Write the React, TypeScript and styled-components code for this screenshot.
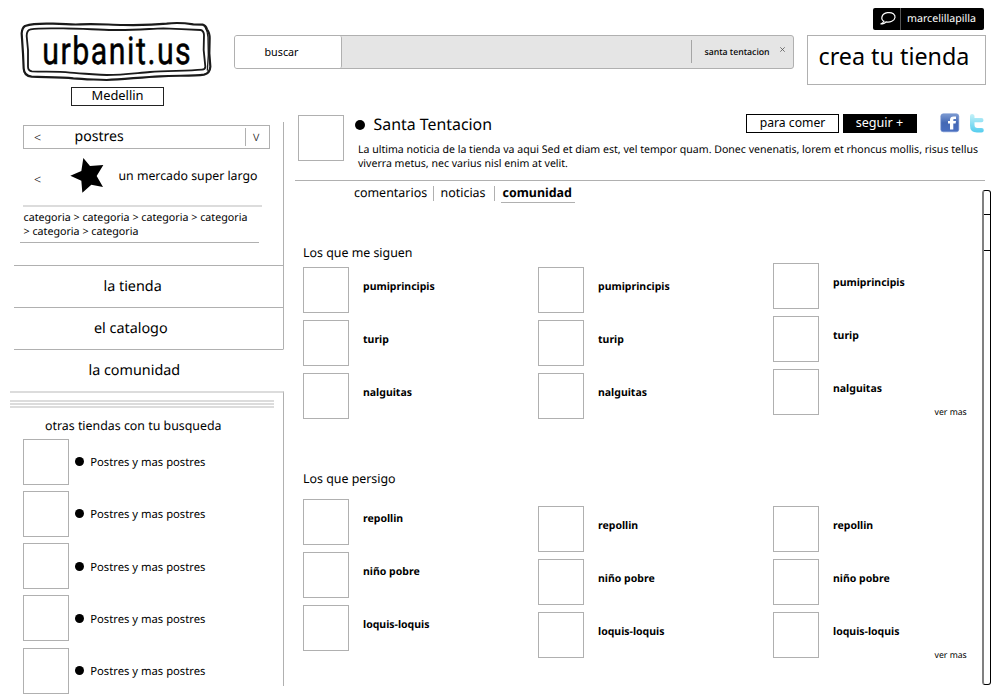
import React from "react";
import styled, { createGlobalStyle } from "styled-components";

const LINE = "#b0b0b0";
const SOFT = "#dcdcdc";

const GlobalStyle = createGlobalStyle`
  * { box-sizing: border-box; }
  body {
    margin: 0;
    background: #fff;
    color: #000;
    font-family: "Noto Sans", "Open Sans", sans-serif;
    text-rendering: geometricPrecision;
    overflow: hidden;
  }
  p, h1, h2, ul { margin: 0; padding: 0; font-weight: 400; list-style: none; }
  button { font: inherit; padding: 0; cursor: pointer; }
`;

const Page = styled.div`
  width: 1000px;
  height: 700px;
  display: flex;
  flex-direction: column;
`;

/* ---------- header ---------- */

const Header = styled.header`
  display: flex;
  align-items: flex-start;
  height: 114px;
  flex: none;
`;

const Brand = styled.div`
  width: 234px;
  padding: 20px 0 0 20px;
  display: flex;
  flex-direction: column;
`;

const LogoArt = styled.svg`
  display: block;
  width: 194px;
  height: 64px;
`;

const LogoText = styled.text`
  font-family: Roboto, sans-serif;
  font-size: 108px;
`;

const City = styled.button`
  width: 93px;
  height: 19px;
  margin: 3px 0 0 51px;
  padding-bottom: 2px;
  border: 1px solid #222;
  background: #fff;
  color: #000;
  font-size: 12.9px;
  line-height: 15px;
`;

const Search = styled.form`
  display: flex;
  width: 560px;
  height: 34px;
  margin-top: 35px;
  border: 1px solid ${LINE};
  border-radius: 3px;
  background: #e5e5e5;
`;

const SearchButton = styled.button`
  width: 107px;
  border: 0;
  border-right: 1px solid ${LINE};
  border-radius: 2px;
  padding-right: 13px;
  background: #fff;
  color: #000;
  font-size: 10.74px;
  line-height: 33px;
`;

const SearchTag = styled.div`
  display: flex;
  margin: 4px 8px 5px auto;
  padding-left: 12.5px;
  width: 94px;
  border-left: 1px solid #a5a5a5;
  font-size: 8.75px;
  font-weight: 500;
  line-height: 25px;
  white-space: nowrap;
`;

const CloseMark = styled.svg`
  width: 5px;
  height: 5px;
  margin: 7px 0 0 auto;
  flex: none;
`;

const Account = styled.div`
  display: flex;
  flex-direction: column;
  align-items: flex-end;
  margin-left: 13px;
  padding-top: 8px;
  width: 179px;
`;

const UserPill = styled.div`
  display: flex;
  width: 111px;
  height: 22px;
  margin-right: 2px;
  border-radius: 2px;
  background: #000;
  color: #fff;
`;

const BubbleCell = styled.span`
  width: 28px;
  border-right: 1px solid #555;
`;

const UserName = styled.span`
  padding-left: 6px;
  font-size: 10.65px;
  line-height: 22px;
`;

const CreateStore = styled.button`
  width: 179px;
  height: 50px;
  margin-top: 5px;
  padding: 0 0 8px 10.5px;
  border: 1px solid ${LINE};
  background: #fff;
  color: #000;
  font-size: 23.3px;
  line-height: 40px;
  text-align: left;
`;

/* ---------- sidebar ---------- */

const Body = styled.div`
  display: flex;
  flex: 1;
  min-height: 0;
`;

const Sidebar = styled.aside`
  width: 284px;
  padding-top: 8px;
  flex: none;
`;

const Filters = styled.div`
  height: 143px;
  padding-top: 3px;
  border-right: 1px solid ${LINE};
`;

const CategorySelect = styled.div`
  display: flex;
  width: 247px;
  height: 24px;
  margin-left: 23px;
  border: 1px solid ${LINE};
  line-height: 24px;
`;

const Arrow = styled.span`
  width: 40px;
  padding-left: 10px;
  color: #222;
  font-size: 12.5px;
  font-weight: 300;
`;

const CategoryName = styled.span`
  flex: 1;
  padding-left: 10.5px;
  font-size: 14.1px;
  line-height: 21px;
`;

const SelectToggle = styled.span`
  width: 24px;
  height: 18px;
  margin-top: 2px;
  padding-left: 7px;
  border-left: 1px solid ${LINE};
  color: #222;
  font-size: 13.5px;
  font-weight: 300;
  line-height: 17px;
`;

const Market = styled.div`
  display: flex;
  height: 56px;
  padding-left: 24px;
`;

const MarketArrow = styled(Arrow)`
  width: 46px;
  line-height: 62px;
`;

const StarIcon = styled.svg`
  width: 34px;
  height: 36px;
  margin-top: 8px;
`;

const MarketName = styled.span`
  padding-left: 14.5px;
  font-size: 12.3px;
  line-height: 53px;
`;

const Trail = styled.p`
  width: 239px;
  height: 36px;
  margin-left: 23px;
  padding: 4px 0 0 .5px;
  border-top: 2px solid ${SOFT};
  font-size: 10.7px;
  line-height: 14px;
`;

const TrailEnd = styled.div`
  width: 239px;
  height: 1px;
  margin: 1px 0 0 20px;
  background: ${LINE};
`;

const Menu = styled.nav`
  display: flex;
  flex-direction: column;
`;

const MenuItem = styled.a<{ $current?: boolean; $shift: number }>`
  height: 42px;
  margin-left: 14px;
  padding-left: ${(p) => p.$shift}px;
  border-top: 1px solid ${LINE};
  border-right: 1px solid ${(p) => (p.$current ? "transparent" : LINE)};
  font-size: 14.35px;
  line-height: 42px;
`;

const Related = styled.section`
  height: 295px;
  margin-left: 10px;
  border-top: 2px solid ${SOFT};
  border-right: 1px solid ${LINE};
`;

const Stripes = styled.div`
  width: 264px;
  height: 8px;
  margin-top: 7px;
  background: repeating-linear-gradient(${SOFT} 0 2px, #fff 2px 3px);
`;

const RelatedTitle = styled.h2`
  padding-left: 35px;
  font-size: 12.38px;
  line-height: 20px;
  margin-top: 8px;
`;

const RelatedList = styled.ul`
  display: grid;
  gap: 6.2px;
  padding: 2.8px 0 0 13px;
`;

const RelatedItem = styled.li`
  display: flex;
  align-items: center;
  height: 46px;
  font-size: 11.25px;
`;

const RelatedName = styled.span`
  padding-top: 2px;
`;

const Thumb = styled.div`
  width: 46px;
  height: 46px;
  flex: none;
  border: 1px solid ${LINE};
  background: #fff;
`;

const Dot = styled.i<{ $size: number }>`
  width: ${(p) => p.$size}px;
  height: ${(p) => p.$size}px;
  border-radius: 50%;
  background: #000;
  flex: none;
`;

const RelatedDot = styled(Dot)`
  margin: 0 6.7px 0 5.5px;
`;

/* ---------- store ---------- */

const Main = styled.main`
  flex: 1;
  padding-left: 11px;
`;

const StoreHeader = styled.div`
  display: flex;
  width: 690px;
  height: 67px;
  padding: 1px 0 0 3px;
  border-bottom: 1px solid ${LINE};
`;

const StoreInfo = styled.div`
  flex: 1;
  padding-left: 10.5px;
`;

const StoreTop = styled.div`
  display: flex;
  height: 28px;
`;

const StoreDot = styled(Dot)`
  margin-top: 5px;
`;

const StoreName = styled.h1`
  flex: 1;
  padding-left: 9px;
  font-size: 15.9px;
  line-height: 19px;
`;

const StoreButton = styled.button<{ $filled?: boolean; $size: number }>`
  width: ${(p) => (p.$filled ? 74 : 93)}px;
  height: 19px;
  margin: -1px 0 0 ${(p) => (p.$filled ? 4 : 0)}px;
  padding: 0 ${(p) => (p.$filled ? 1 : 0)}px 2px 0;
  border: 1px solid #000;
  background: ${(p) => (p.$filled ? "#000" : "#fff")};
  color: ${(p) => (p.$filled ? "#fff" : "#000")};
  font-size: ${(p) => p.$size}px;
  line-height: 15px;
`;

const SocialIcon = styled.svg<{ $gap: number; $width: number }>`
  width: ${(p) => p.$width}px;
  height: 20px;
  margin: -2px 0 0 ${(p) => p.$gap}px;
  flex: none;
`;

const News = styled.p`
  padding-left: 3.5px;
  font-size: 10.57px;
  line-height: 14px;
  white-space: nowrap;
`;

const Tabs = styled.nav`
  display: flex;
  height: 22px;
  padding: 5px 0 0 59px;
  font-size: 12.45px;
  line-height: 14px;
`;

const Tab = styled.a<{ $active?: boolean; $width: number; $indent: number }>`
  width: ${(p) => p.$width}px;
  height: ${(p) => (p.$active ? 17 : 15)}px;
  margin-left: ${(p) => (p.$active ? 5.5 : 0)}px;
  padding-left: ${(p) => p.$indent}px;
  border: 0 solid ${LINE};
  border-width: ${(p) => (p.$active ? "0 0 1px 0" : "0 1px 0 0")};
  font-weight: ${(p) => (p.$active ? 700 : 400)};
`;

const Scroller = styled.div`
  display: flex;
  height: 495px;
  margin-top: -13px;
`;

const Content = styled.div`
  width: 687px;
  padding: 52px 0 0 8px;
`;

const Group = styled.section<{ $top: number }>`
  height: 226px;
  h2 { font-size: 12.4px; line-height: 21px; height: ${(p) => p.$top}px; }
`;

const Columns = styled.div`
  display: grid;
  grid-template-columns: repeat(3, 235px);
`;

const Column = styled.ul<{ $offset: number }>`
  display: grid;
  align-content: start;
  gap: 7px;
  margin-top: ${(p) => p.$offset}px;
`;

const Person = styled.li`
  display: flex;
  height: 46px;
  gap: 14px;
  font-size: 10.5px;
  font-weight: 700;
  line-height: 40px;
`;

const More = styled.a<{ $pull: number }>`
  display: block;
  margin: ${(p) => p.$pull}px 0 0 631.5px;
  font-size: 8.69px;
  line-height: 12px;
`;

const ScrollTrack = styled.div`
  width: 9px;
  height: 495px;
  padding-top: 23px;
  border: 1px solid #000;
  border-left: 2px solid #808080;
  border-radius: 3px;
`;

const ScrollThumb = styled.div`
  height: 37px;
  border: solid #000;
  border-width: 1px 0;
`;

const followers = ["pumiprincipis", "turip", "nalguitas"];
const following = ["repollin", "niño pobre", "loquis-loquis"];
const relatedStores = Array.from({ length: 5 }, () => "Postres y mas postres");

function People({ title, names, top, offsets, pull }: {
  title: string; names: string[]; top: number; offsets: number[]; pull: number;
}) {
  return (
    <Group $top={top}>
      <h2>{title}</h2>
      <Columns>
        {offsets.map((offset, i) => (
          <Column key={i} $offset={offset}>
            {names.map((name) => (
              <Person key={name}><Thumb />{name}</Person>
            ))}
          </Column>
        ))}
      </Columns>
      <More $pull={pull}>ver mas</More>
    </Group>
  );
}

function Logo() {
  return (
    <LogoArt viewBox="60 60 582 192" fill="none" stroke="#1a1a1a" strokeLinejoin="round">
      <path strokeWidth="6.5" d="M75 78Q100 70 150 71C190 70 210 75 240 73C290 70 330 75 370 75C430 76 460 75 500 71C530 67 560 70 580 73L608 74Q617 76 621 88Q629 98 629 115L628 160L631 200Q630 220 612 224C580 229 530 226 480 229C430 231 370 238 320 240C280 238 250 238 220 235C180 230 130 232 95 230Q72 228 71 205L69 160L65 100Q66 84 75 78Z" />
      <path strokeWidth="5.5" d="M92 88C120 84 150 86 190 85C250 86 290 89 340 90C400 91 440 87 490 85C530 86 570 88 602 90Q612 93 612 106L611 150L616 200Q616 208 606 209C560 213 500 212 450 216C410 219 370 225 320 225C270 222 240 221 210 218C170 214 130 216 96 214Q84 212 84 200L84 150L80 108Q80 90 92 88Z" />
      <path strokeWidth="4" d="M614 78Q623 94 624 112L625 165L622 212" />
      <g transform="translate(127 193) scale(.84 1.06)" fill="#000" stroke="#000" strokeWidth="1.5">
        <LogoText textLength="530">urbanit.us</LogoText>
      </g>
    </LogoArt>
  );
}

export default function App() {
  return (
    <>
      <GlobalStyle />
      <Page>
        <Header>
          <Brand>
            <Logo />
            <City>Medellin</City>
          </Brand>
          <Search>
            <SearchButton type="button">buscar</SearchButton>
            <SearchTag>
              santa tentacion
              <CloseMark viewBox="0 0 5 5" stroke="#555" strokeWidth=".8"><path d="M.3 .3L4.7 4.7M4.7 .3L.3 4.7" /></CloseMark>
            </SearchTag>
          </Search>
          <Account>
            <UserPill>
              <BubbleCell>
                <svg width="27" height="22" fill="none" stroke="#fff" strokeWidth="1.2">
                  <path d="M7.5 16Q10 15.3 11 13.3C7.5 11.5 8 5.8 14.5 4.7C19.5 4 22.5 6.5 22 9.5C21.5 13 17 14.6 13 13.9Q11.5 16 7.5 16Z" />
                </svg>
              </BubbleCell>
              <UserName>marcelillapilla</UserName>
            </UserPill>
            <CreateStore>crea tu tienda</CreateStore>
          </Account>
        </Header>

        <Body>
          <Sidebar>
            <Filters>
              <CategorySelect>
                <Arrow>&lt;</Arrow>
                <CategoryName>postres</CategoryName>
                <SelectToggle>v</SelectToggle>
              </CategorySelect>
              <Market>
                <MarketArrow>&lt;</MarketArrow>
                <StarIcon viewBox="210 141 102 108">
                  <path d="M250 144L270 168L310 165L290 198L309 231L274 224L247 248L244 212L211 197L244 183Z" />
                </StarIcon>
                <MarketName>un mercado super largo</MarketName>
              </Market>
              <Trail>
                categoria &gt; categoria &gt; categoria &gt; categoria<br />
                &gt; categoria &gt; categoria
              </Trail>
              <TrailEnd />
            </Filters>
            <Menu>
              <MenuItem $shift={89.5}>la tienda</MenuItem>
              <MenuItem $shift={80}>el catalogo</MenuItem>
              <MenuItem $shift={74.5} $current>la comunidad</MenuItem>
            </Menu>
            <Related>
              <Stripes />
              <RelatedTitle>otras tiendas con tu busqueda</RelatedTitle>
              <RelatedList>
                {relatedStores.map((name, i) => (
                  <RelatedItem key={i}>
                    <Thumb />
                    <RelatedDot $size={9} />
                    <RelatedName>{name}</RelatedName>
                  </RelatedItem>
                ))}
              </RelatedList>
            </Related>
          </Sidebar>

          <Main>
            <StoreHeader>
              <Thumb />
              <StoreInfo>
                <StoreTop>
                  <StoreDot $size={10} />
                  <StoreName>Santa Tentacion</StoreName>
                  <StoreButton $size={12.2}>para comer</StoreButton>
                  <StoreButton $size={12.6} $filled>seguir +</StoreButton>
                  <SocialIcon $gap={23} $width={20} viewBox="0 0 20 20">
                    <defs>
                      <linearGradient id="fb" x1="0" y1="0" x2="0" y2="1">
                        <stop offset="0" stopColor="#7d9bd2" />
                        <stop offset=".5" stopColor="#4468b4" />
                        <stop offset="1" stopColor="#4a6fc0" />
                      </linearGradient>
                    </defs>
                    <rect x=".8" y=".8" width="18" height="18" rx="2.5" fill="url(#fb)" stroke="#6f8fce" strokeWidth=".6" />
                    <path d="M10 16.5V10.6H8V8.1H10V6.8C10 4.5 11.3 3.4 13.6 3.4H16V6H14.4C13.6 6 13.3 6.3 13.3 7V8.1H16L15.6 10.6H13.3V16.5Z" fill="#fff" />
                  </SocialIcon>
                  <SocialIcon $gap={9} $width={16} viewBox="0 0 16 20">
                    <defs>
                      <linearGradient id="tw" x1="0" y1="0" x2="0" y2="1">
                        <stop offset="0" stopColor="#c4f1f8" />
                        <stop offset="1" stopColor="#55cdee" />
                      </linearGradient>
                    </defs>
                    <path d="M1 3Q1 1 3 1Q5.5 1 5.5 3.5V5H12.5Q14.5 5 14.5 7.2Q14.5 9.3 12.5 9.3H5.5V12Q5.5 15 8.5 15H12.5Q14.8 15 14.8 17.3Q14.8 19.5 12.5 19.5H8Q1 19.5 1 12.5Z" fill="url(#tw)" />
                  </SocialIcon>
                </StoreTop>
                <News>
                  La ultima noticia de la tienda va aqui Sed et diam est, vel tempor quam. Donec venenatis, lorem et rhoncus mollis, risus tellus<br />
                  viverra metus, nec varius nisl enim at velit.
                </News>
              </StoreInfo>
            </StoreHeader>
            <Tabs>
              <Tab $width={80} $indent={0}>comentarios</Tab>
              <Tab $width={61} $indent={6.5}>noticias</Tab>
              <Tab $width={74} $indent={2} $active>comunidad</Tab>
            </Tabs>
            <Scroller>
              <Content>
                <People title="Los que me siguen" names={followers} top={25} offsets={[0, 0, -4]} pull={-13} />
                <People title="Los que persigo" names={following} top={31} offsets={[0, 7, 7]} pull={-9} />
              </Content>
              <ScrollTrack><ScrollThumb /></ScrollTrack>
            </Scroller>
          </Main>
        </Body>
      </Page>
    </>
  );
}
